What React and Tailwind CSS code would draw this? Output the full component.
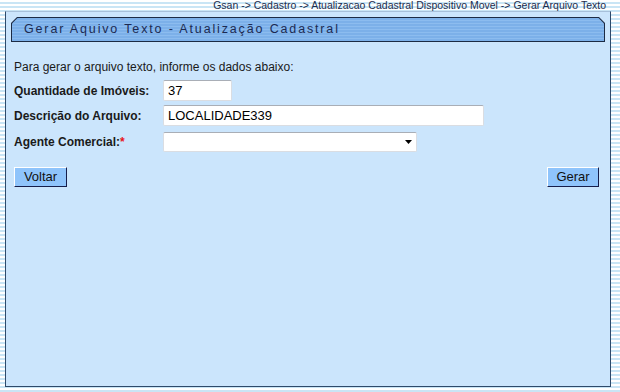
import React from 'react';

export default function App() {
  return (
    <div className="w-[620px] h-[392px] overflow-hidden font-['Liberation_Sans',Arial,sans-serif] bg-[repeating-linear-gradient(to_bottom,#ffffff_0px,#ffffff_2px,#c9e5f5_2px,#c9e5f5_4px)]">
      {/* Breadcrumb */}
      <div className="h-[11px] pr-[14px] text-right text-[10.5px] leading-[11px] text-[#1d2d4d]">
        Gsan -&gt; Cadastro -&gt; Atualizacao Cadastral Dispositivo Movel -&gt; Gerar Arquivo Texto
      </div>

      {/* Main panel */}
      <div className="ml-[5px] w-[606px] h-[376px] bg-[#cbe5fc] border border-[#2e4a6a] border-t-[#a7c0da] flex flex-col">
        {/* Title bar */}
        <div className="mx-[5px] mt-[5px] h-[25px] bg-[#1c2b44] p-px [clip-path:polygon(6px_0,calc(100%-6px)_0,100%_6px,100%_100%,0_100%,0_6px)]">
          <div className="h-full flex items-center pl-[12px] bg-[repeating-linear-gradient(to_bottom,#7cb0e9_0px,#7cb0e9_2px,#8cbcef_2px,#8cbcef_3px)] [clip-path:polygon(5.5px_0,calc(100%-5.5px)_0,100%_5.5px,100%_100%,0_100%,0_5.5px)]">
            <span className="text-[12.5px] tracking-[1.85px] text-[#1b2a52]">
              Gerar Aquivo Texto - Atualização Cadastral
            </span>
          </div>
        </div>

        {/* Form */}
        <div className="pl-[8px] mt-[18px] text-[12px] leading-[14px] text-[#1a1a1a]">
          <p>Para gerar o arquivo texto, informe os dados abaixo:</p>

          <div className="mt-[6px] flex items-center h-[21px]">
            <span className="w-[149px] font-bold">Quantidade de Imóveis:</span>
            <input
              defaultValue="37"
              className="w-[69px] h-[21px] px-[4px] bg-white text-[13px] text-black outline-none border border-[#dadde2] border-t-[#a9aeb6] rounded-[2px]"
            />
          </div>

          <div className="mt-[4px] flex items-center h-[21px]">
            <span className="w-[149px] font-bold">Descrição do Arquivo:</span>
            <input
              defaultValue="LOCALIDADE339"
              className="w-[321px] h-[21px] px-[4px] bg-white text-[13px] text-black outline-none border border-[#dadde2] border-t-[#a9aeb6] rounded-[2px]"
            />
          </div>

          <div className="mt-[6px] flex items-center h-[20px]">
            <span className="w-[149px] font-bold">
              Agente Comercial:<span className="text-[#e8141e]">*</span>
            </span>
            <div className="relative w-[254px] h-[20px] bg-white border border-[#dadde2] border-t-[#a9aeb6] rounded-[2px]">
              <svg className="absolute right-[4px] top-[7px]" width="7" height="4" viewBox="0 0 7 4">
                <polygon points="0,0 7,0 3.5,4" fill="#000" />
              </svg>
            </div>
          </div>
        </div>

        {/* Buttons */}
        <div className="mt-[15px] pl-[8px] pr-[11px] flex justify-between">
          <button className="w-[53px] h-[20px] bg-[#8fc4fb] border border-white border-r-[#151d4a] border-b-[#151d4a] text-[13px] leading-[18px] text-[#111]">
            Voltar
          </button>
          <button className="w-[52px] h-[20px] bg-[#8fc4fb] border border-white border-r-[#151d4a] border-b-[#151d4a] text-[13px] leading-[18px] text-[#111]">
            Gerar
          </button>
        </div>
      </div>
    </div>
  );
}
